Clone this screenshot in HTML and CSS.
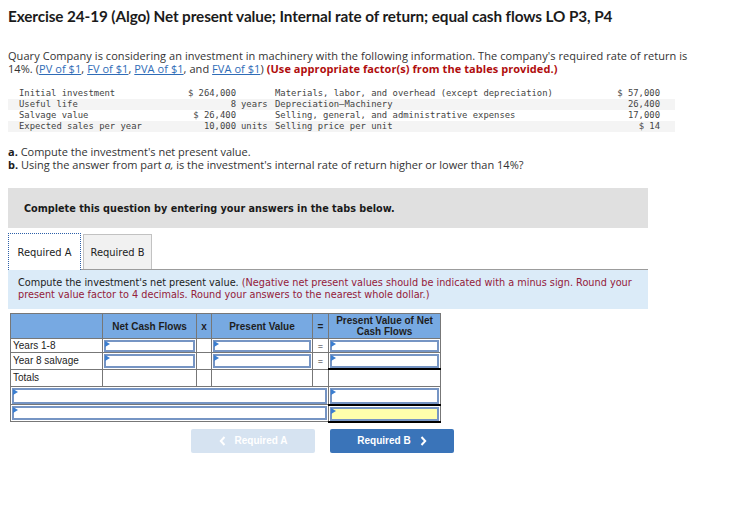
FILE: index.html
```html
<!DOCTYPE html>
<html lang="en">
<head>
<meta charset="utf-8">
<title>Exercise 24-19 (Algo)</title>
<link rel="stylesheet" href="styles.css">
</head>
<body>
<div class="page">
  <h1 class="title">Exercise 24-19 (Algo) Net present value; Internal rate of return; equal cash flows LO P3, P4</h1>

  <p class="intro">Quary Company is considering an investment in machinery with the following information. The company's required rate of return is 14%. (<a href="#">PV of $1</a>, <a href="#">FV of $1</a>, <a href="#">PVA of $1</a>, and <a href="#">FVA of $1</a>) <strong class="warn">(Use appropriate factor(s) from the tables provided.)</strong></p>

  <div class="facts">
    <div class="fact-row">
      <span>Initial investment</span><span class="num">$ 264,000</span><span class="unit"></span>
      <span>Materials, labor, and overhead (except depreciation)</span><span class="num">$ 57,000</span>
    </div>
    <div class="fact-row alt">
      <span>Useful life</span><span class="num">8</span><span class="unit">years</span>
      <span>Depreciation—Machinery</span><span class="num">26,400</span>
    </div>
    <div class="fact-row">
      <span>Salvage value</span><span class="num">$ 26,400</span><span class="unit"></span>
      <span>Selling, general, and administrative expenses</span><span class="num">17,000</span>
    </div>
    <div class="fact-row alt">
      <span>Expected sales per year</span><span class="num">10,000</span><span class="unit">units</span>
      <span>Selling price per unit</span><span class="num">$ 14</span>
    </div>
  </div>

  <div class="parts">
    <p><b>a.</b> Compute the investment's net present value.</p>
    <p><b>b.</b> Using the answer from part <i>a,</i> is the investment's internal rate of return higher or lower than 14%?</p>
  </div>

  <div class="prompt">Complete this question by entering your answers in the tabs below.</div>

  <div class="tabs">
    <div class="tab active">Required A</div>
    <div class="tab">Required B</div>
  </div>

  <div class="instructions">Compute the investment's net present value. <span class="hint">(Negative net present values should be indicated with a minus sign. Round your present value factor to 4 decimals. Round your answers to the nearest whole dollar.)</span></div>

  <table class="npv">
    <colgroup>
      <col class="c-label"><col class="c-flow"><col class="c-op"><col class="c-pv"><col class="c-op2"><col class="c-total">
    </colgroup>
    <thead>
      <tr class="r-head">
        <th></th>
        <th>Net Cash Flows</th>
        <th>x</th>
        <th>Present Value</th>
        <th>=</th>
        <th>Present Value of Net<br>Cash Flows</th>
      </tr>
    </thead>
    <tbody>
      <tr class="r-1">
        <td class="label">Years 1-8</td>
        <td class="in"><div class="field"></div></td>
        <td></td>
        <td class="in"><div class="field"></div></td>
        <td class="op">=</td>
        <td class="in"><div class="field"></div></td>
      </tr>
      <tr class="r-2">
        <td class="label">Year 8 salvage</td>
        <td class="in"><div class="field"></div></td>
        <td></td>
        <td class="in"><div class="field"></div></td>
        <td class="op">=</td>
        <td class="in"><div class="field"></div></td>
      </tr>
      <tr class="r-3">
        <td class="label">Totals</td>
        <td></td>
        <td></td>
        <td></td>
        <td></td>
        <td class="ruled"></td>
      </tr>
      <tr class="r-4">
        <td class="in" colspan="5"><div class="field"></div></td>
        <td class="in"><div class="field"></div></td>
      </tr>
      <tr class="r-5">
        <td class="in" colspan="5"><div class="field"></div></td>
        <td class="in ruled closed"><div class="field result"></div></td>
      </tr>
    </tbody>
  </table>

  <div class="nav">
    <button class="btn prev" type="button" disabled>
      <svg width="7" height="10" viewBox="0 0 7 10"><path d="M5.5 1 L1.8 5 L5.5 9" fill="none" stroke="currentColor" stroke-width="2"/></svg>
      Required A
    </button>
    <button class="btn next" type="button">
      Required B
      <svg width="7" height="10" viewBox="0 0 7 10"><path d="M1.5 1 L5.2 5 L1.5 9" fill="none" stroke="currentColor" stroke-width="2"/></svg>
    </button>
  </div>
</div>
</body>
</html>
```

FILE: styles.css
```css
* { box-sizing: border-box; }

body {
  margin: 0;
  background: #fff;
  color: #333;
  font-family: "Open Sans", "Liberation Sans", sans-serif;
}

.page {
  padding: 7px 8px 20px;
}

.title {
  margin: 0;
  font-family: Lato, "Liberation Sans", sans-serif;
  font-size: 15.3px;
  line-height: 18px;
  font-weight: 700;
  color: #1b1b1b;
  letter-spacing: -0.1px;
}

.intro {
  margin: 24px 0 0;
  width: 700px;
  font-size: 11px;
  line-height: 13px;
  letter-spacing: 0.06px;
  color: #333;
}

.intro a,
.intro strong {
  display: inline-block;
  line-height: 13px;
}

.intro a {
  color: #2f6cb7;
  text-decoration: underline;
}

.warn {
  color: #b00d0d;
  font-weight: 700;
}

/* fact sheet, monospaced like a printout */
.facts {
  margin-top: 13px;
  width: 667px;
  font-family: "DejaVu Sans Mono", "Liberation Mono", monospace;
  font-size: 8.9px;
  line-height: 11px;
  color: #444;
}

.fact-row {
  display: grid;
  grid-template-columns: 150px 67px 39px 1fr auto;
  padding: 0 15px 0 11px;
  height: 11px;
  white-space: pre;
}

.fact-row.alt {
  background: #f4f4f4;
}

.fact-row .num {
  text-align: right;
}

.fact-row .unit {
  padding-left: 5px;
}

.parts {
  margin-top: 13px;
  font-size: 11px;
  line-height: 13px;
  color: #333;
}

.parts p {
  margin: 0;
}

.parts b {
  color: #1b1b1b;
}

.prompt {
  margin-top: 17px;
  width: 640px;
  height: 40px;
  padding: 0 16px;
  display: flex;
  align-items: center;
  background: #e0e0e0;
  font-family: "DejaVu Sans Condensed", "DejaVu Sans", sans-serif;
  font-size: 10.75px;
  font-weight: 700;
  color: #1a1a1a;
}

.tabs {
  margin-top: 6px;
  width: 640px;
  height: 36px;
  display: flex;
  align-items: flex-end;
  gap: 2px;
  border-bottom: 1px solid #9c9c9c;
}

.tab {
  height: 35px;
  display: flex;
  align-items: center;
  justify-content: center;
  font-family: "DejaVu Sans Condensed", "DejaVu Sans", sans-serif;
  font-size: 11px;
  color: #222;
  background: #f1f1f1;
  border: 1px solid #c2c2c2;
  border-bottom: none;
}

.tab:nth-child(1) { width: 73px; }
.tab:nth-child(2) { width: 69px; }

.tab.active {
  height: 37px;
  margin-bottom: -1px;
  background: #fff;
  border: 1px dotted #2c5fa8;
  border-bottom: none;
}

.instructions {
  width: 640px;
  height: 39px;
  padding: 7px 8px 0 10px;
  background: #dbebf8;
  font-family: "DejaVu Sans Condensed", "DejaVu Sans", sans-serif;
  font-size: 10.8px;
  line-height: 12px;
  color: #1c1c1c;
}

.hint {
  color: #94203a;
}

/* worksheet */
.npv {
  margin: 4px 0 0 2px;
  border-collapse: collapse;
  table-layout: fixed;
  width: 430px;
  font-family: "Liberation Sans", sans-serif;
  font-size: 10px;
  color: #1c1c1c;
}

.c-label { width: 92px; }
.c-flow  { width: 94px; }
.c-op    { width: 15px; }
.c-pv    { width: 101px; }
.c-op2   { width: 16px; }
.c-total { width: 112px; }

.npv th,
.npv td {
  border: 1px solid #777;
  padding: 0;
}

.npv th {
  background: #77a9e2;
  font-weight: 700;
  line-height: 11px;
  color: #1e1e1e;
  text-align: center;
}

.r-head { height: 25px; }
.r-3 { height: 17px; }

.npv td.label {
  padding-left: 2px;
  line-height: 12px;
}

.npv td.op {
  text-align: center;
  font-size: 9px;
  line-height: 10px;
}

.npv td.in {
  padding: 1px 1px 0;
  vertical-align: top;
}

.field {
  position: relative;
  height: 12px;
  border: 2px solid #7695c4;
  background: #fff;
}

.r-2 .field { height: 14px; }
.r-4 .field { height: 16px; }
.r-5 .field { height: 14px; }

/* entry marker in the corner of each answer box */
.field::before {
  content: "";
  position: absolute;
  left: -1px;
  top: -1px;
  border-style: solid;
  border-width: 3px 0 3px 5px;
  border-color: transparent transparent transparent #3a7ed0;
}

.field.result {
  background: #ffffac;
}

.npv td.ruled {
  border-top: 2px solid #000;
}

.npv td.closed {
  border-bottom: 2px solid #000;
}

.nav {
  margin: 6px 0 0 183px;
  display: flex;
  gap: 15px;
}

.btn {
  width: 124px;
  height: 24px;
  border: none;
  border-radius: 2px;
  display: flex;
  align-items: center;
  justify-content: center;
  gap: 9px;
  font-family: "Liberation Sans", sans-serif;
  font-size: 10px;
  font-weight: 700;
  color: #fff;
}

.btn.prev {
  background: #d6e3f1;
}

.btn.next {
  background: #3a74b9;
}
```
